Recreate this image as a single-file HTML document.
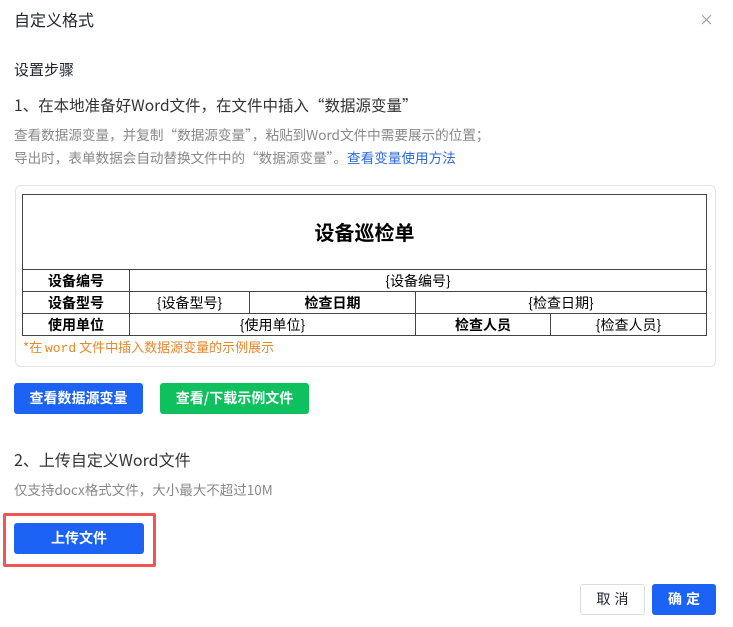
<!DOCTYPE html>
<html><head><meta charset="utf-8"><style>
*{margin:0;padding:0;box-sizing:border-box}
body{width:733px;height:627px;background:#fff;font-family:"Noto Sans CJK SC","Liberation Sans",sans-serif;position:relative;overflow:hidden;color:#1f2329}
.a{position:absolute;white-space:nowrap}
.btn{position:absolute;color:#fff;font-size:14px;text-align:center;border-radius:3px;font-weight:bold}
table{position:absolute;left:22px;top:194px;width:685px;border-collapse:collapse;font-family:"Noto Sans CJK SC",sans-serif;font-size:14px;color:#000}
td{border:1px solid #444;text-align:center;height:22px;padding:0;line-height:20px}
</style></head><body>
<div class="a" style="left:14px;top:8px;font-size:16px;line-height:22px">自定义格式</div>
<div class="a" style="left:699px;top:9px;font-size:15px;color:#999">×</div>
<div class="a" style="left:14px;top:59px;font-size:15px;line-height:21px">设置步骤</div>
<div class="a" style="left:14px;top:94px;font-size:15.5px;line-height:22px;color:#333">1、在本地准备好Word文件，在文件中插入“数据源变量”</div>
<div class="a" style="left:14px;top:125px;font-size:13.6px;line-height:18px;color:#888">查看数据源变量，并复制“数据源变量”，粘贴到Word文件中需要展示的位置；</div>
<div class="a" style="left:14px;top:148px;font-size:13.6px;line-height:18px;color:#888">导出时，表单数据会自动替换文件中的“数据源变量”。<span style="color:#2f6bd9">查看变量使用方法</span></div>
<div class="a" style="left:15px;top:185px;width:701px;height:182px;border:1px solid #e3e3e3;border-radius:6px"></div>
<table>
<tr><td colspan="6" style="height:75px;font-size:20px;font-weight:bold">设备巡检单</td></tr>
<tr><td style="width:107px;font-weight:bold">设备编号</td><td colspan="5">{设备编号}</td></tr>
<tr><td style="font-weight:bold">设备型号</td><td style="width:120px">{设备型号}</td><td style="width:166px;font-weight:bold">检查日期</td><td colspan="3">{检查日期}</td></tr>
<tr><td style="font-weight:bold">使用单位</td><td colspan="3">{使用单位}</td><td style="width:135px;font-weight:bold">检查人员</td><td>{检查人员}</td></tr>
</table>
<div class="a" style="left:23px;top:338px;font-size:13px;line-height:18px;color:#e8872b">*在 <span style="font-family:'Liberation Mono',monospace">word</span> 文件中插入数据源变量的示例展示</div>
<div class="btn" style="left:14px;top:383px;width:129px;height:31px;line-height:31px;background:#1c63f5">查看数据源变量</div>
<div class="btn" style="left:160px;top:383px;width:149px;height:31px;line-height:31px;background:#0ec15e">查看/下载示例文件</div>
<div class="a" style="left:14px;top:448px;font-size:16px;line-height:22px;color:#333">2、上传自定义Word文件</div>
<div class="a" style="left:14px;top:480px;font-size:13.5px;line-height:18px;color:#888">仅支持docx格式文件，大小最大不超过10M</div>
<div class="a" style="left:3px;top:513px;width:153px;height:54px;border:3px solid #f05454;border-radius:2px"></div>
<div class="btn" style="left:14px;top:523px;width:130px;height:31px;line-height:31px;background:#1c63f5">上传文件</div>
<div class="a" style="left:580px;top:584px;width:65px;height:31px;border:1px solid #dcdcdc;border-radius:3px;text-align:center;line-height:29px;font-size:14px;letter-spacing:4px;padding-left:4px">取消</div>
<div class="btn" style="left:652px;top:584px;width:64px;height:31px;line-height:31px;background:#1c63f5;letter-spacing:4px;padding-left:4px">确定</div>
</body></html>
